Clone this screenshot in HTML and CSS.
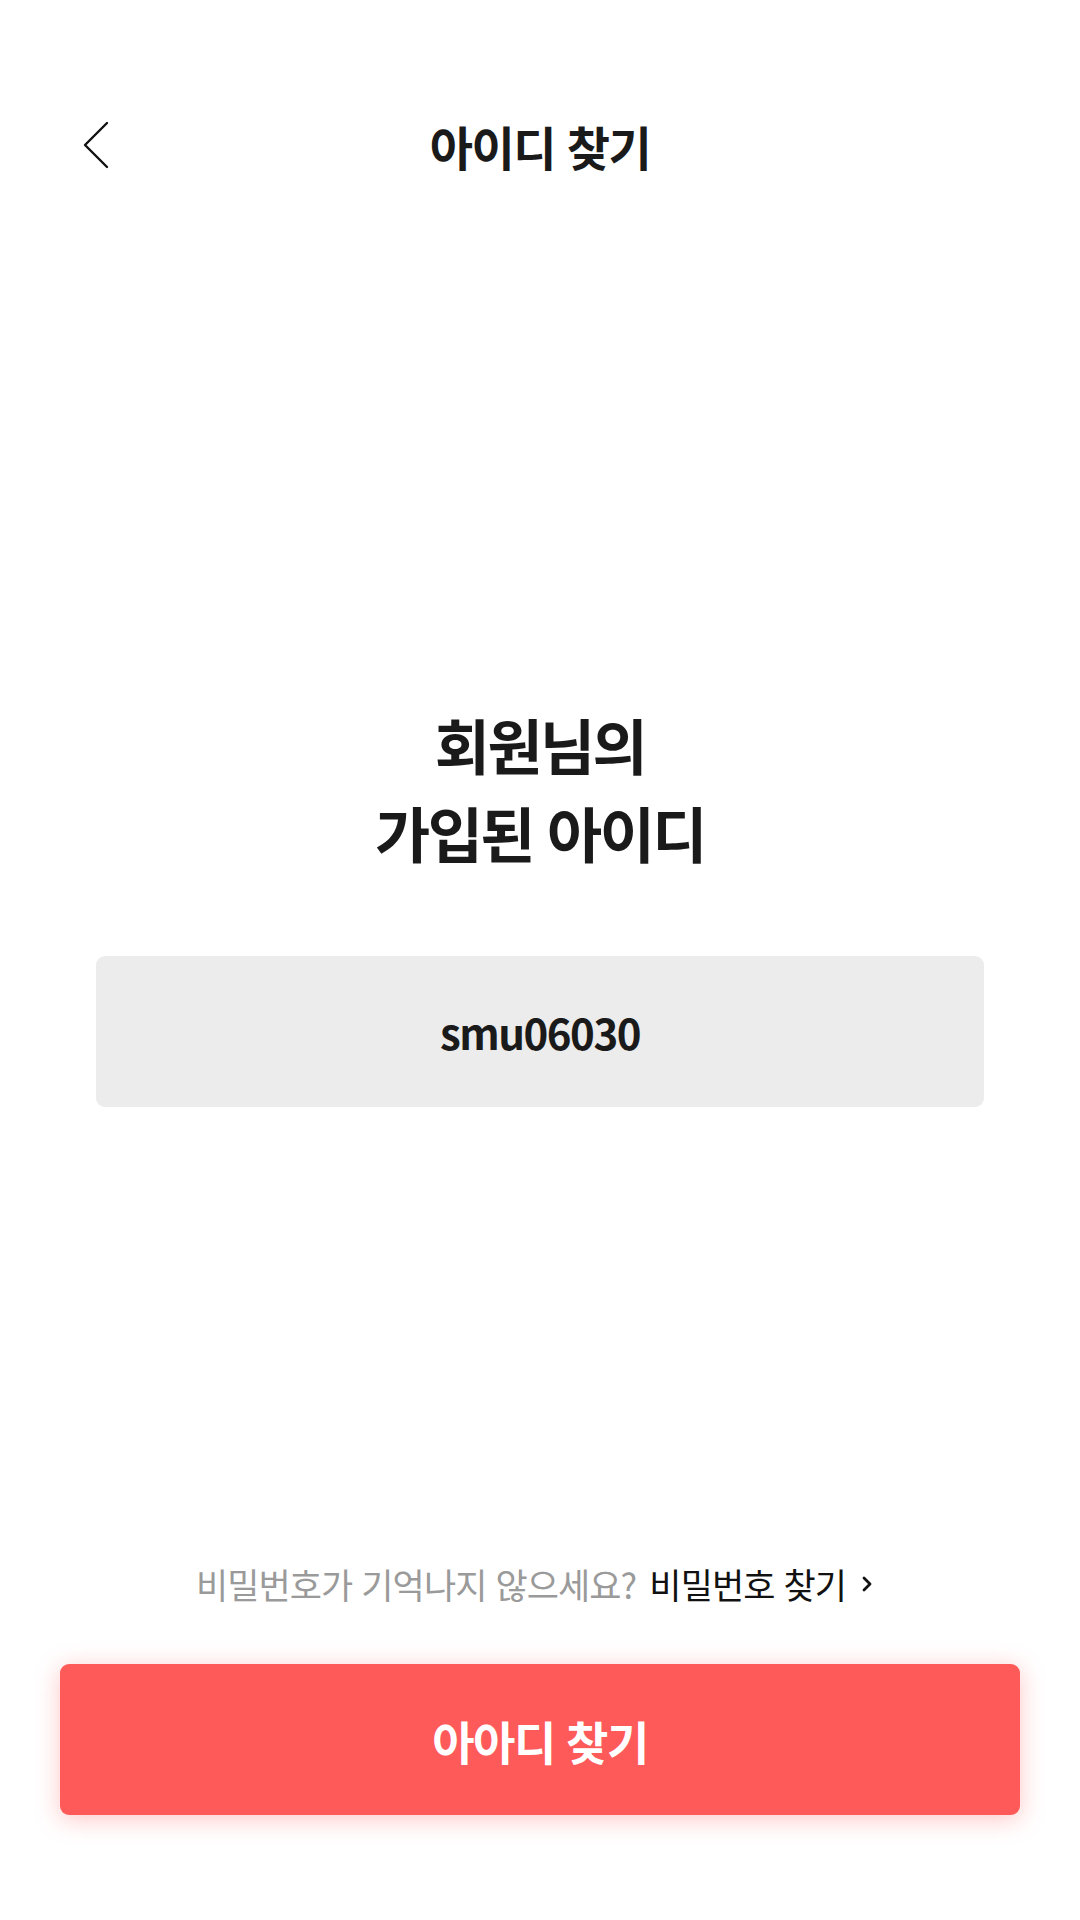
FILE: index.html
```html
<!DOCTYPE html>
<html lang="ko">
<head>
<meta charset="utf-8">
<title>아이디 찾기</title>
<link rel="stylesheet" href="styles.css">
</head>
<body>
<div class="page">
  <header class="header">
    <div class="header-left">
      <svg class="back" width="28" height="48" viewBox="0 0 28 48" aria-hidden="true">
        <polyline points="25,2 3,24 25,46" fill="none" stroke="#111" stroke-width="2.4" stroke-linecap="round" stroke-linejoin="round"/>
      </svg>
    </div>
    <h1 class="title">아이디 찾기</h1>
    <div class="header-right"></div>
  </header>

  <main class="main">
    <h2 class="heading">회원님의<br>가입된 아이디</h2>
    <div class="id-box">smu06030</div>
  </main>

  <footer class="footer">
    <p class="hint">
      <span class="hint-gray">비밀번호가 기억나지 않으세요?</span>
      <span class="hint-link">비밀번호 찾기</span>
      <svg class="hint-arrow" width="12" height="16" viewBox="0 0 12 16" aria-hidden="true">
        <polyline points="3,2 9,8 3,14" fill="none" stroke="#111" stroke-width="2.8" stroke-linecap="round" stroke-linejoin="round"/>
      </svg>
    </p>
    <button class="cta" type="button">아아디 찾기</button>
  </footer>
</div>
</body>
</html>
```

FILE: styles.css
```css
* { box-sizing: border-box; }
html, body {
  margin: 0;
  padding: 0;
  background: #ffffff;
}
body {
  font-family: "Noto Sans CJK KR", "Noto Sans", sans-serif;
  color: #1a1a1a;
}
.page {
  width: 1080px;
  height: 1920px;
  display: flex;
  flex-direction: column;
}
.header {
  display: grid;
  grid-template-columns: 1fr auto 1fr;
  align-items: center;
  height: 104px;
  margin-top: 93px;
}
.header-left {
  padding-left: 82px;
  display: flex;
  align-items: center;
}
.back { display: block; }
.title {
  margin: 0;
  font-size: 47px;
  font-weight: 700;
  letter-spacing: -1.5px;
  line-height: 1;
  color: #1a1a1a;
}
.main {
  flex: 1;
  display: flex;
  flex-direction: column;
  align-items: center;
  padding-top: 503px;
}
.heading {
  margin: 0;
  text-align: center;
  font-size: 60px;
  font-weight: 700;
  line-height: 88px;
  letter-spacing: -2.6px;
  color: #1a1a1a;
}
.id-box {
  margin-top: 80px;
  width: 888px;
  height: 151px;
  border-radius: 9px;
  background: #ececec;
  display: flex;
  align-items: center;
  justify-content: center;
  font-family: "Noto Sans CJK KR", "Noto Sans", sans-serif;
  font-size: 42px;
  font-weight: 700;
  letter-spacing: -1.5px;
  color: #1a1a1a;
}
.footer {
  display: flex;
  flex-direction: column;
  align-items: center;
  padding-bottom: 105px;
}
.hint {
  margin: 0 0 58px;
  padding-right: 11px;
  display: flex;
  align-items: center;
  font-size: 35px;
  letter-spacing: -0.9px;
  line-height: 44px;
}
.hint-gray { color: #9a9a9a; }
.hint-link { color: #111111; margin-left: 13px; }
.hint-arrow { margin-left: 15px; }
.cta {
  width: 960px;
  height: 151px;
  border: 0;
  border-radius: 9px;
  background: #ff5a5a;
  box-shadow: 0 4px 24px rgba(255, 90, 90, 0.35);
  color: #ffffff;
  font-family: "Noto Sans CJK KR", "Noto Sans", sans-serif;
  font-size: 46px;
  font-weight: 700;
  letter-spacing: -1.5px;
  padding: 0;
}
```
